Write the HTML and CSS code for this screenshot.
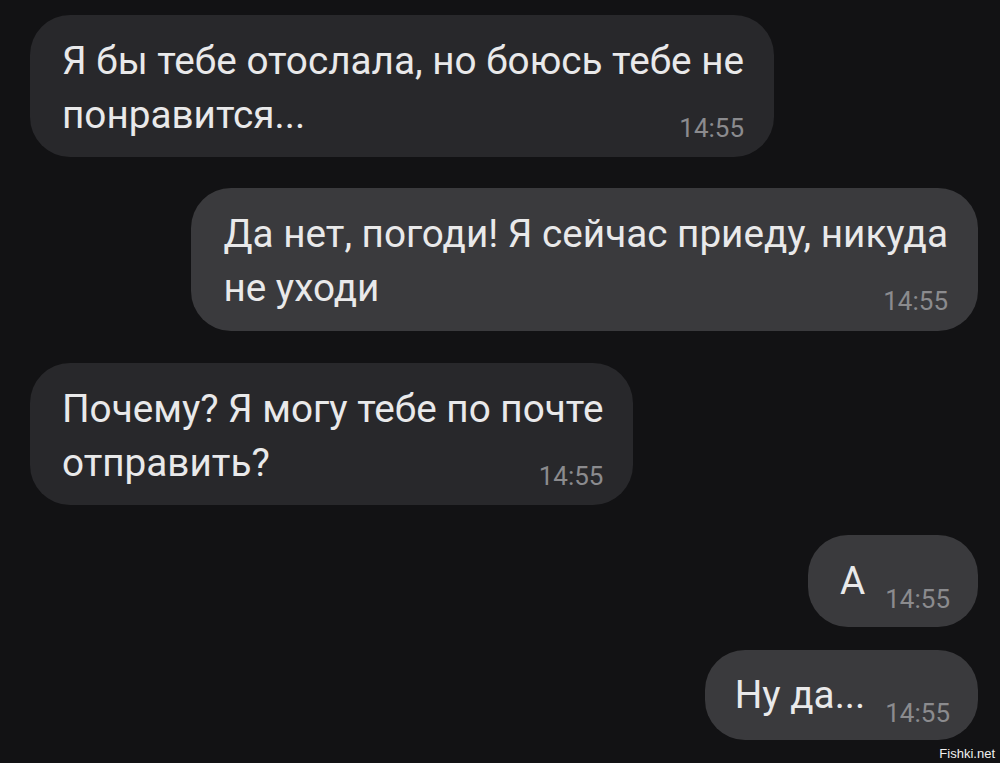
FILE: index.html
```html
<!DOCTYPE html>
<html lang="ru">
<head>
<meta charset="utf-8">
<link rel="stylesheet" href="styles.css">
</head>
<body>
<div class="chat">
  <div class="bubble in multi b1">
    <div class="text">Я бы тебе отослала, но боюсь тебе не<br>понравится...</div>
    <div class="time">14:55</div>
  </div>
  <div class="bubble out multi b2">
    <div class="text">Да нет, погоди! Я сейчас приеду, никуда<br>не уходи</div>
    <div class="time">14:55</div>
  </div>
  <div class="bubble in multi b3">
    <div class="text">Почему? Я могу тебе по почте<br>отправить?</div>
    <div class="time">14:55</div>
  </div>
  <div class="bubble out single b4">
    <div class="text">А</div>
    <div class="time">14:55</div>
  </div>
  <div class="bubble out single b5">
    <div class="text">Ну да...</div>
    <div class="time">14:55</div>
  </div>
</div>
<div class="watermark">Fishki.net</div>
</body>
</html>
```

FILE: styles.css
```css
html, body {
  margin: 0;
  padding: 0;
  background: #121214;
}
body {
  width: 1000px;
  height: 763px;
  overflow: hidden;
  position: relative;
  font-family: Roboto, "Noto Sans", sans-serif;
}
.chat {
  display: flex;
  flex-direction: column;
  padding: 15px 22px 0 30px;
}
.bubble {
  border-radius: 40px;
  color: #e9e9ea;
  box-sizing: border-box;
}
.in {
  align-self: flex-start;
  background: #28282b;
}
.out {
  align-self: flex-end;
  background: #3a3a3d;
}
.text {
  font-size: 38.7px;
  line-height: 54px;
  white-space: nowrap;
}
.time {
  font-size: 26px;
  line-height: 26px;
  color: #8b8b8e;
  white-space: nowrap;
}
.multi {
  display: flex;
  flex-direction: column;
  height: 142px;
  padding: 19px 30px 16px 32px;
}
.multi .time {
  align-self: flex-end;
  margin-top: -27px;
}
.single {
  display: flex;
  align-items: flex-end;
  gap: 20px;
  height: 91px;
  padding: 17px 28px 15px 32px;
}
.single .text {
  margin-bottom: 4px;
}
.b2 { margin-top: 31px; height: 143px; }
.b3 { margin-top: 32px; }
.b4 { margin-top: 30px; height: 92px; padding-top: 18px; }
.b5 { margin-top: 23px; padding-left: 30px; height: 90px; padding-bottom: 14px; }
.watermark {
  position: absolute;
  right: 5px;
  bottom: 2px;
  font-family: "Liberation Sans", Arial, sans-serif;
  font-size: 13px;
  color: #f0f0f0;
}
```
